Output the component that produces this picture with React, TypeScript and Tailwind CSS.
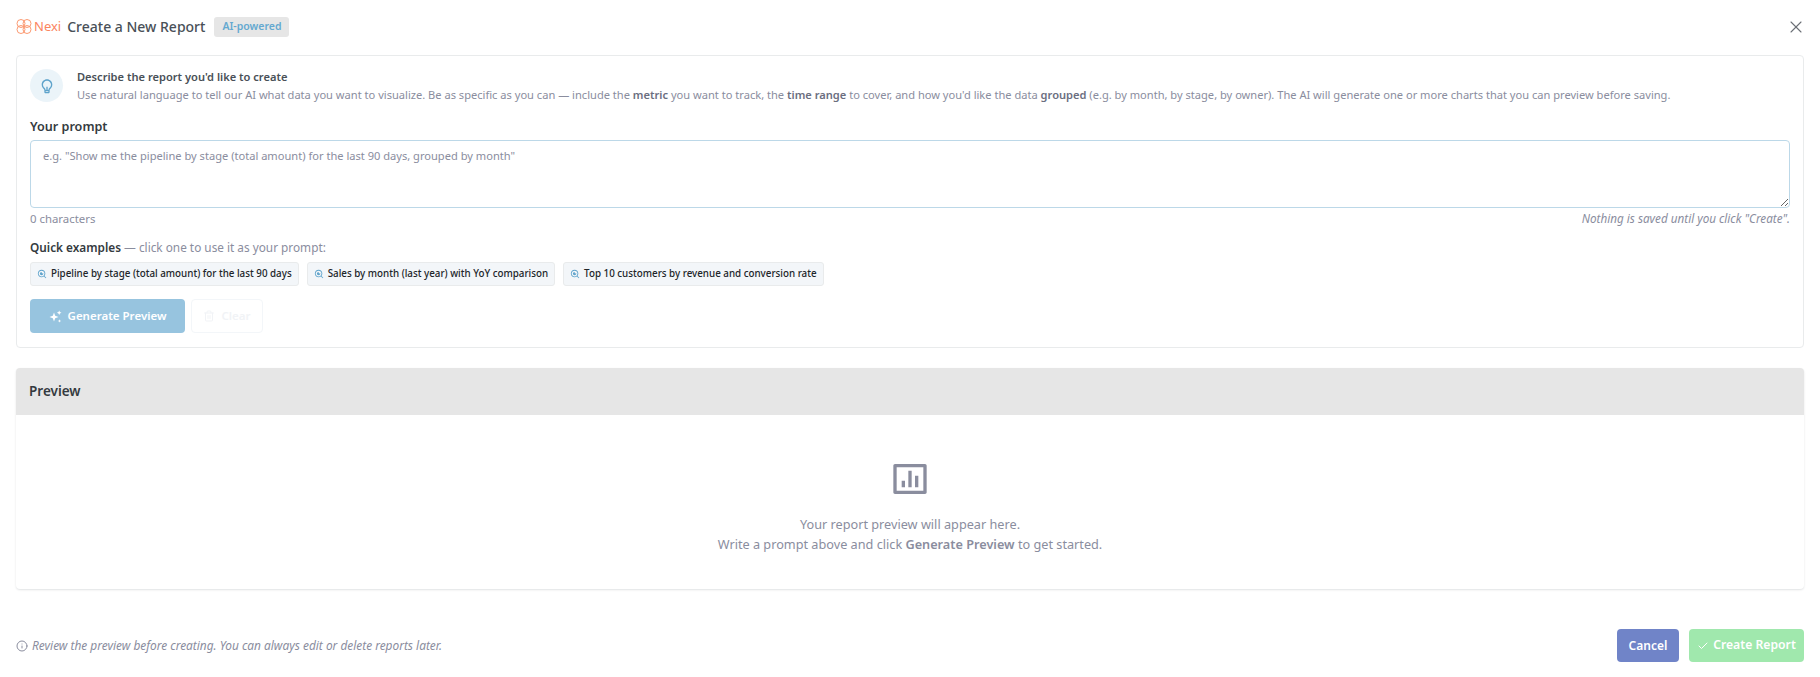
import { Trash2, Info, Check, X } from 'lucide-react';
import { RiBarChartBoxLine, RiLightbulbLine, RiSearchEyeLine } from 'react-icons/ri';

const examples = [
  'Pipeline by stage (total amount) for the last 90 days',
  'Sales by month (last year) with YoY comparison',
  'Top 10 customers by revenue and conversion rate',
];

function NexiLogo() {
  return (
    <div className="flex items-center gap-[2px] text-[#fb8560]">
      <svg width="16" height="15" viewBox="0 0 16 15" fill="none" stroke="#fb9a72" strokeWidth="1">
        <circle cx="5" cy="4.5" r="4" />
        <circle cx="11" cy="4.5" r="4" />
        <circle cx="5" cy="10.5" r="4" />
        <circle cx="11" cy="10.5" r="4" />
      </svg>
      <span className="text-[13px] leading-none">Nexi</span>
    </div>
  );
}

function SparkleIcon() {
  return (
    <svg width="13" height="13" viewBox="0 0 13 13" fill="currentColor">
      <path d="M5 2.5 6.2 5.8 9.5 7 6.2 8.2 5 11.5 3.8 8.2 0.5 7 3.8 5.8Z" />
      <path d="M10.2 0.5 10.9 2.1 12.5 2.8 10.9 3.5 10.2 5.1 9.5 3.5 7.9 2.8 9.5 2.1Z" />
      <path d="M10.5 9.2 11 10.4 12.2 10.9 11 11.4 10.5 12.6 10 11.4 8.8 10.9 10 10.4Z" />
    </svg>
  );
}

export default function App() {
  return (
    <div className="w-[1820px] h-[677px] bg-white flex flex-col overflow-hidden font-['Noto_Sans',sans-serif] text-[#8a8d9e]">
      {/* Header */}
      <div className="h-[55px] shrink-0 flex items-center pl-4 pr-4 pb-[2px]">
        <NexiLogo />
        <h1 className="ml-[6px] text-[14px] font-medium text-[#495057]">Create a New Report</h1>
        <span className="ml-[9px] px-2 h-5 flex items-center rounded-[3px] bg-[#e6e6e6] text-[#64a9d0] text-[10.5px] font-semibold">AI-powered</span>
        <X className="ml-auto w-[20px] h-[20px] text-[#6b6f76] mr-[-2px]" strokeWidth={1.3} />
      </div>

      <div className="px-4 flex flex-col">
        {/* Prompt card */}
        <div className="h-[293px] border border-[#e9ebec] rounded-[4px] px-[13px] pt-[12px] flex flex-col">
          <div className="flex items-start">
            <div className="mt-[1px] w-[33px] h-[33px] rounded-full bg-[#ebf4f9] flex items-center justify-center shrink-0">
              <RiLightbulbLine className="w-4 h-4 text-[#5ea3cb]" />
            </div>
            <div className="ml-[14px]">
              <div className="text-[11.1px] leading-[18px] font-semibold text-[#495057]">Describe the report you'd like to create</div>
              <p className="text-[11.1px] leading-[18px] whitespace-nowrap">
                Use natural language to tell our AI what data you want to visualize. Be as specific as you can — include the <b className="font-semibold text-[#6b6e7f]">metric</b> you want to track, the <b className="font-semibold text-[#6b6e7f]">time range</b> to cover, and how you'd like the data <b className="font-semibold text-[#6b6e7f]">grouped</b> (e.g. by month, by stage, by owner). The AI will generate one or more charts that you can preview before saving.
              </p>
            </div>
          </div>

          <label className="mt-[13px] text-[12.6px] leading-[20px] font-semibold text-[#343a40]">Your prompt</label>
          <textarea
            className="mt-[3px] h-[68px] w-full rounded-[4px] border border-[#bcd8e8] px-3 py-[6px] text-[11.1px] leading-[18px] outline-none placeholder:text-[#8a8d9e]"
            placeholder={'e.g. "Show me the pipeline by stage (total amount) for the last 90 days, grouped by month"'}
          />
          <div className="mt-[2px] flex justify-between text-[11.4px] leading-[17px]">
            <span>0 characters</span>
            <span className="italic text-[11.7px]">Nothing is saved until you click "Create".</span>
          </div>

          <div className="mt-[11px] text-[11.8px] leading-[18px]">
            <b className="font-semibold text-[#343a40]">Quick examples</b> — click one to use it as your prompt:
          </div>

          <div className="mt-[6px] flex gap-2">
            {examples.map((text) => (
              <button key={text} className="h-6 px-[6px] flex items-center gap-[4px] rounded-[3px] border border-[#e9ebec] bg-[#f3f6f9] text-[9.8px] font-medium text-[#212529]">
                <RiSearchEyeLine className="w-[10px] h-[10px] text-[#5ea3cb]" />
                {text}
              </button>
            ))}
          </div>

          <div className="mt-[13px] flex gap-[6px]">
            <button className="w-[155px] h-[34px] flex items-center justify-center gap-[6px] rounded-[4px] bg-[#97c4df] text-white text-[11.5px] font-semibold">
              <SparkleIcon />
              Generate Preview
            </button>
            <button className="w-[72px] h-[34px] flex items-center justify-center gap-[6px] rounded-[4px] border border-[#f3f6f9] text-[#f1f3f6] text-[11.5px] font-semibold">
              <Trash2 className="w-3 h-3" />
              Clear
            </button>
          </div>
        </div>

        {/* Preview card */}
        <div className="mt-[20px] h-[221px] rounded-[4px] shadow-[0_1px_2px_rgba(56,65,74,0.15)] flex flex-col overflow-hidden">
          <div className="h-[47px] shrink-0 bg-[#e6e6e6] flex items-center px-[13px] text-[13.5px] font-semibold text-[#343a40]">Preview</div>
          <div className="flex-1 flex flex-col items-center pt-[44px]">
            <RiBarChartBoxLine className="w-10 h-10 text-[#8a8d9e]" />
            <p className="mt-[15px] text-[12.7px] leading-[20px]">Your report preview will appear here.</p>
            <p className="text-[12.7px] leading-[20px]">Write a prompt above and click <b className="font-semibold">Generate Preview</b> to get started.</p>
          </div>
        </div>
      </div>

      {/* Footer */}
      <div className="mt-[40px] px-4 flex items-center">
        <Info className="w-3 h-3 mr-[4px]" />
        <span className="text-[11.9px] italic">Review the preview before creating. You can always edit or delete reports later.</span>
        <button className="ml-auto w-[62px] h-[33px] rounded-[4px] bg-[#7084c8] text-white text-[12px] font-semibold">Cancel</button>
        <button className="ml-[10px] w-[115px] h-[33px] flex items-center justify-center gap-1 rounded-[4px] bg-[#a0e8ad] text-white text-[12.2px] font-semibold">
          <Check className="w-3 h-3" />
          Create Report
        </button>
      </div>
    </div>
  );
}
